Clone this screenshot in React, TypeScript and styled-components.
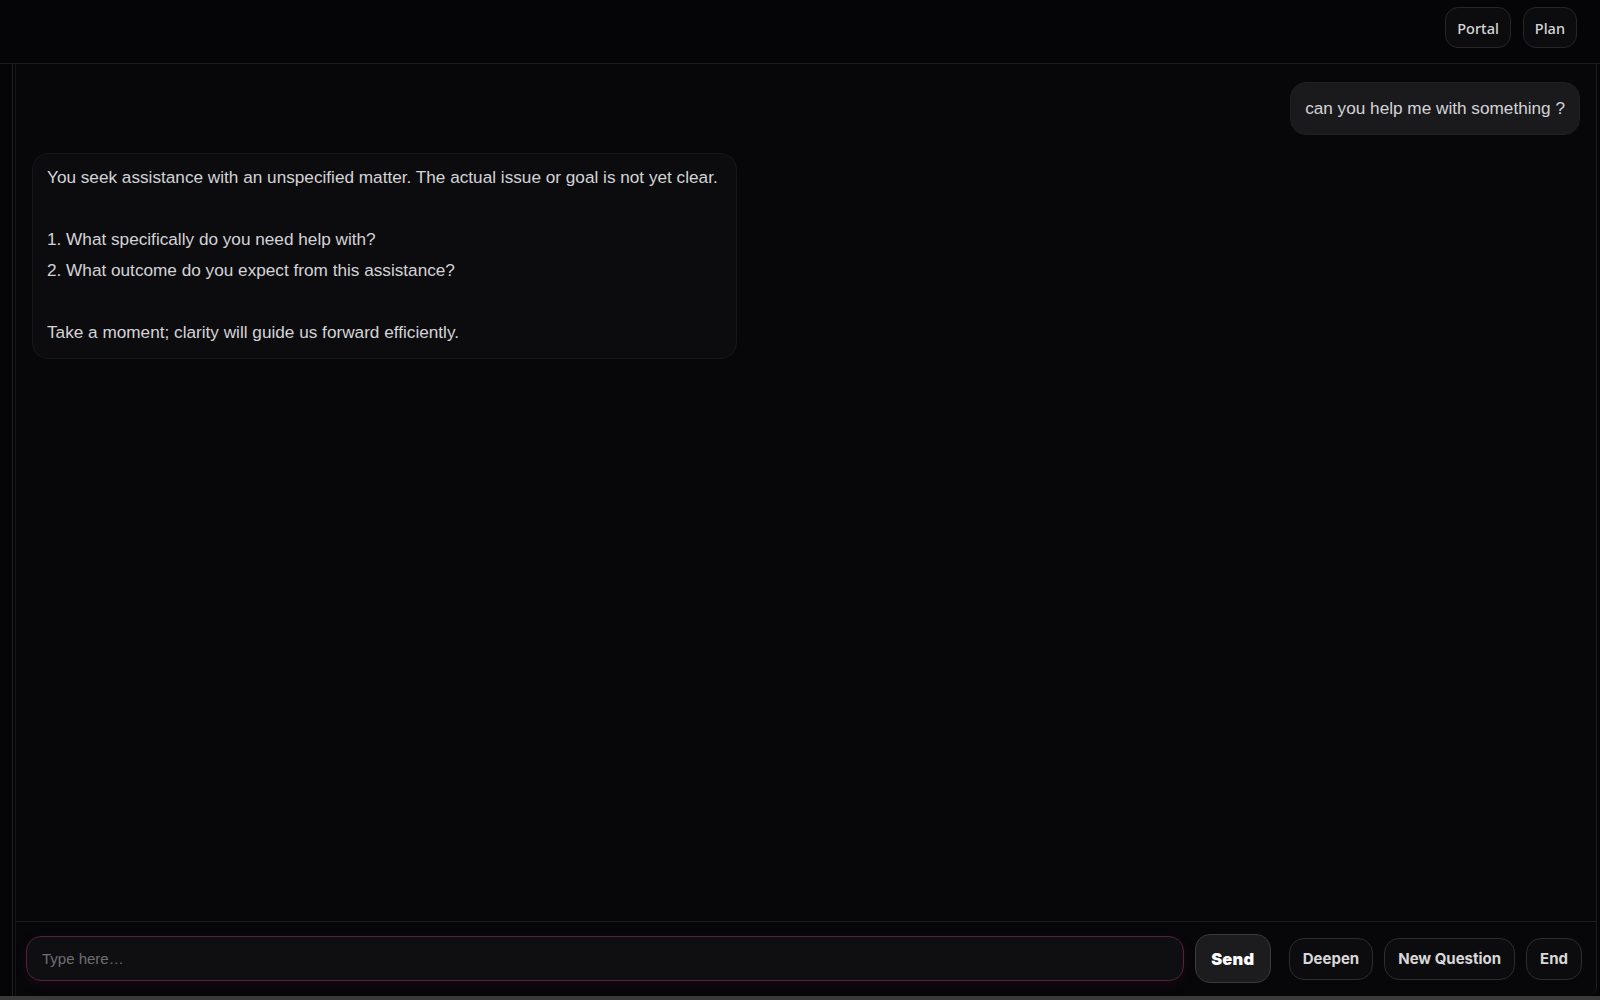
import styled, { createGlobalStyle } from "styled-components";

const GlobalStyle = createGlobalStyle`
  html, body {
    margin: 0;
    padding: 0;
    background: #3a3a3b;
  }
  * {
    box-sizing: border-box;
  }
`;

const Shell = styled.div`
  height: 996px;
  display: flex;
  flex-direction: column;
  background: #050507;
  color: #d4d4d8;
`;

const Header = styled.header`
  height: 64px;
  flex-shrink: 0;
  display: flex;
  justify-content: flex-end;
  align-items: flex-start;
  gap: 12px;
  padding: 7px 23px 0 0;
  border-bottom: 1px solid #1c1c1f;
`;

const NavButton = styled.button`
  height: 41px;
  padding: 0 11px;
  background: #0c0c0e;
  border: 1px solid #262629;
  border-radius: 13px;
  color: #d6d6d8;
  font-family: "Noto Sans", "Open Sans", sans-serif;
  font-size: 14.5px;
  font-weight: 500;
  cursor: pointer;
`;

const Body = styled.div`
  flex: 1;
  min-height: 0;
  display: flex;
  padding-right: 3px;
`;

const Sidebar = styled.aside`
  width: 13px;
  flex-shrink: 0;
  border-right: 1px solid #1f1f22;
`;

const Panel = styled.main`
  flex: 1;
  margin-left: 2px;
  display: flex;
  flex-direction: column;
  background: #070709;
  border-left: 1px solid #141417;
  border-right: 1px solid #1d1d20;
  border-bottom-right-radius: 9px;
  overflow: hidden;
`;

const Messages = styled.section`
  flex: 1;
  display: flex;
  flex-direction: column;
  gap: 18px;
  padding: 18px 16px;
`;

const Bubble = styled.div<{ $mine?: boolean }>`
  align-self: ${(p) => (p.$mine ? "flex-end" : "flex-start")};
  max-width: 720px;
  padding: ${(p) => (p.$mine ? "10px 14px" : "8px 18px 10px 14px")};
  border-radius: 16px;
  background: ${(p) => (p.$mine ? "#1a1a1d" : "#0c0c0f")};
  border: 1px solid ${(p) => (p.$mine ? "#1f1f22" : "#17171a")};
  font-family: "Liberation Sans", Arial, sans-serif;
  font-size: 17.2px;
  line-height: 1.8;
  color: #d4d4d8;
  white-space: pre-wrap;
`;

const Composer = styled.footer`
  height: 75px;
  flex-shrink: 0;
  display: flex;
  align-items: center;
  padding: 0 14px 1px 10px;
  border-top: 1px solid #1d1d20;
`;

const InputGroup = styled.div`
  flex: 1;
  display: flex;
  align-items: center;
  gap: 11px;
`;

const Input = styled.input`
  flex: 1;
  height: 45px;
  padding: 0 15px;
  background: #0f0f12;
  border: 1px solid #58203a;
  border-radius: 15px;
  box-shadow: 0 4px 12px rgba(90, 20, 45, 0.18);
  color: #d4d4d8;
  font-family: "Liberation Sans", Arial, sans-serif;
  font-size: 15px;
  outline: none;

  &::placeholder {
    color: #6e6e73;
  }
`;

const SendButton = styled.button`
  width: 76px;
  height: 49px;
  background: #1c1c1f;
  border: 1px solid #3a3a3e;
  border-radius: 15px;
  color: #ffffff;
  font-family: Inter, "Liberation Sans", sans-serif;
  font-size: 16.5px;
  font-weight: 900;
  letter-spacing: 0.2px;
  cursor: pointer;
`;

const Actions = styled.div`
  display: flex;
  align-items: center;
  gap: 11px;
  margin-left: 18px;
`;

const ActionButton = styled.button`
  height: 42px;
  padding: 0 13px;
  background: #0c0c0e;
  border: 1px solid #2d2d30;
  border-radius: 15px;
  color: #d8d8da;
  font-family: Inter, "Liberation Sans", sans-serif;
  font-size: 15px;
  font-weight: 700;
  cursor: pointer;
`;

const reply = `You seek assistance with an unspecified matter. The actual issue or goal is not yet clear.

1. What specifically do you need help with?
2. What outcome do you expect from this assistance?

Take a moment; clarity will guide us forward efficiently.`;

export default function App() {
  return (
    <>
      <GlobalStyle />
      <Shell>
        <Header>
          <NavButton>Portal</NavButton>
          <NavButton>Plan</NavButton>
        </Header>
        <Body>
          <Sidebar />
          <Panel>
            <Messages>
              <Bubble $mine>can you help me with something ?</Bubble>
              <Bubble>{reply}</Bubble>
            </Messages>
            <Composer>
              <InputGroup>
                <Input placeholder="Type here…" />
                <SendButton>Send</SendButton>
              </InputGroup>
              <Actions>
                <ActionButton>Deepen</ActionButton>
                <ActionButton>New Question</ActionButton>
                <ActionButton>End</ActionButton>
              </Actions>
            </Composer>
          </Panel>
        </Body>
      </Shell>
    </>
  );
}
